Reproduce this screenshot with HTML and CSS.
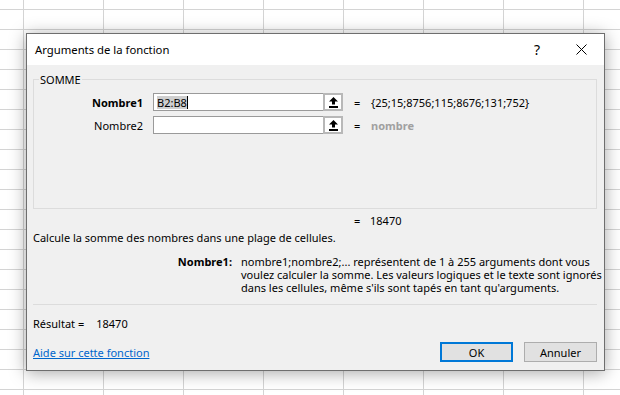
FILE: index.html
```html
<!DOCTYPE html>
<html lang="fr">
<head>
    <meta charset="UTF-8">
    <title>Arguments de la fonction</title>
    <link rel="stylesheet" href="styles.css">
</head>
<body>
    <div class="dialog">
        <div class="titlebar">
            <span class="title">Arguments de la fonction</span>
            <span class="title-btn help">?</span>
            <span class="title-btn close">
                <svg width="11" height="11" viewBox="0 0 11 11"><path d="M0.5 0.5 L10.5 10.5 M10.5 0.5 L0.5 10.5" stroke="#000" stroke-width="1"/></svg>
            </span>
        </div>

        <div class="content">
            <fieldset class="group">
                <legend>SOMME</legend>
                <div class="arg">
                    <label class="arg-name bold">Nombre1</label>
                    <div class="ref-input">
                        <span class="ref-text"><span class="sel">B2:B8</span><span class="caret"></span></span>
                        <span class="ref-btn">
                            <svg width="9" height="11" viewBox="0 0 9 11"><path d="M4.5 0 L9 4.5 L6 4.5 L6 7.5 L3 7.5 L3 4.5 L0 4.5 Z" fill="#000"/><rect x="0" y="9" width="9" height="2" fill="#000"/></svg>
                        </span>
                    </div>
                    <span class="eq">=</span>
                    <span class="arg-value">{25;15;8756;115;8676;131;752}</span>
                </div>
                <div class="arg">
                    <label class="arg-name">Nombre2</label>
                    <div class="ref-input">
                        <span class="ref-text"></span>
                        <span class="ref-btn">
                            <svg width="9" height="11" viewBox="0 0 9 11"><path d="M4.5 0 L9 4.5 L6 4.5 L6 7.5 L3 7.5 L3 4.5 L0 4.5 Z" fill="#000"/><rect x="0" y="9" width="9" height="2" fill="#000"/></svg>
                        </span>
                    </div>
                    <span class="eq">=</span>
                    <span class="arg-value hint">nombre</span>
                </div>
            </fieldset>

            <div class="total"><span class="eq">=</span><span class="arg-value">18470</span></div>

            <p class="desc">Calcule la somme des nombres dans une plage de cellules.</p>

            <div class="arg-help">
                <span class="arg-help-name">Nombre1:</span>
                <span class="arg-help-text">nombre1;nombre2;... représentent de 1 à 255 arguments dont vous<br>voulez calculer la somme. Les valeurs logiques et le texte sont ignorés<br>dans les cellules, même s'ils sont tapés en tant qu'arguments.</span>
            </div>

            <hr class="sep">

            <div class="result">Résultat =<span class="result-value">18470</span></div>

            <div class="footer">
                <a href="#" class="help-link">Aide sur cette fonction</a>
                <div class="buttons">
                    <button class="btn btn-ok">OK</button>
                    <button class="btn">Annuler</button>
                </div>
            </div>
        </div>
    </div>
</body>
</html>
```

FILE: styles.css
```css
body {
    margin: 0;
    padding: 33px 0 0 26px;
    height: 395px;
    box-sizing: border-box;
    overflow: hidden;
    font-family: 'Noto Sans', sans-serif;
    font-size: 11px;
    color: #000;
    background-color: #fff;
    background-image: linear-gradient(to right, #d4d4d4 1px, transparent 1px),
                      linear-gradient(to bottom, #d4d4d4 1px, transparent 1px);
    background-size: 80px 20px;
    background-position: 23px 9px;
}
.dialog {
    width: 577px;
    height: 336px;
    border: 1px solid #6e6e6e;
    background-color: #f0f0f0;
    box-shadow: 0 2px 16px rgba(0, 0, 0, 0.35);
    display: flex;
    flex-direction: column;
}
.titlebar {
    height: 31px;
    background-color: #fff;
    display: flex;
    align-items: center;
    padding-left: 8px;
}
.title {
    flex: 1;
    font-size: 11.3px;
}
.title-btn {
    width: 46px;
    height: 31px;
    display: flex;
    align-items: center;
    justify-content: center;
}
.help {
    font-size: 14px;
}
.close {
    margin-left: -2px;
    width: 46px;
}
.content {
    flex: 1;
    padding: 0 7px 0 6px;
    display: flex;
    flex-direction: column;
}
.group {
    margin: 7px 0 0;
    padding: 6px 0 0;
    height: 137px;
    box-sizing: border-box;
    border: 1px solid #dcdcdc;
    min-inline-size: 0;
}
.group legend {
    margin-left: 5px;
    padding: 0 1px;
    line-height: 15px;
}
.arg {
    display: flex;
    align-items: center;
    height: 18px;
    margin-bottom: 5px;
}
.arg-name {
    width: 109px;
    margin-right: 10px;
    text-align: right;
}
.bold {
    font-weight: bold;
}
.ref-input {
    width: 190px;
    height: 18px;
    box-sizing: border-box;
    border: 1px solid #9a9a9a;
    background-color: #fff;
    display: flex;
}
.ref-text {
    flex: 1;
    padding-left: 3px;
    display: flex;
    align-items: center;
}
.sel {
    background-color: #cfcfcf;
    line-height: 13px;
}
.caret {
    width: 1px;
    height: 13px;
    background-color: #000;
}
.ref-btn {
    width: 20px;
    margin: -1px -1px -1px 0;
    box-sizing: border-box;
    border: 2px solid #b8b8b8;
    background-color: #fff;
    display: flex;
    align-items: center;
    justify-content: center;
}
.eq {
    margin-left: 11px;
    width: 17px;
}
.hint {
    color: #a0a0a0;
    font-weight: bold;
}
.total {
    display: flex;
    margin-top: 4px;
    padding-left: 321px;
    line-height: 15px;
}
.total .eq {
    margin-left: 0;
    width: 16px;
}
.desc {
    margin: 2px 0 0;
    line-height: 15px;
}
.arg-help {
    display: flex;
    margin-top: 10px;
    line-height: 13px;
    white-space: nowrap;
}
.arg-help-name {
    flex: none;
    width: 199px;
    margin-right: 9px;
    text-align: right;
    font-weight: bold;
}
.sep {
    margin: 10px 0 0;
    border: none;
    border-top: 1px solid #dcdcdc;
}
.result {
    margin-top: 11px;
    line-height: 15px;
}
.result-value {
    margin-left: 12px;
}
.footer {
    margin-top: 11px;
    display: flex;
    align-items: center;
    justify-content: space-between;
}
.help-link {
    color: #0066cc;
}
.buttons {
    display: flex;
    gap: 11px;
}
.btn {
    width: 73px;
    height: 20px;
    padding: 0;
    font-family: 'Noto Sans', sans-serif;
    font-size: 11px;
    background-color: #e1e1e1;
    border: 1px solid #adadad;
}
.btn-ok {
    border: 2px solid #0078d7;
}
```
